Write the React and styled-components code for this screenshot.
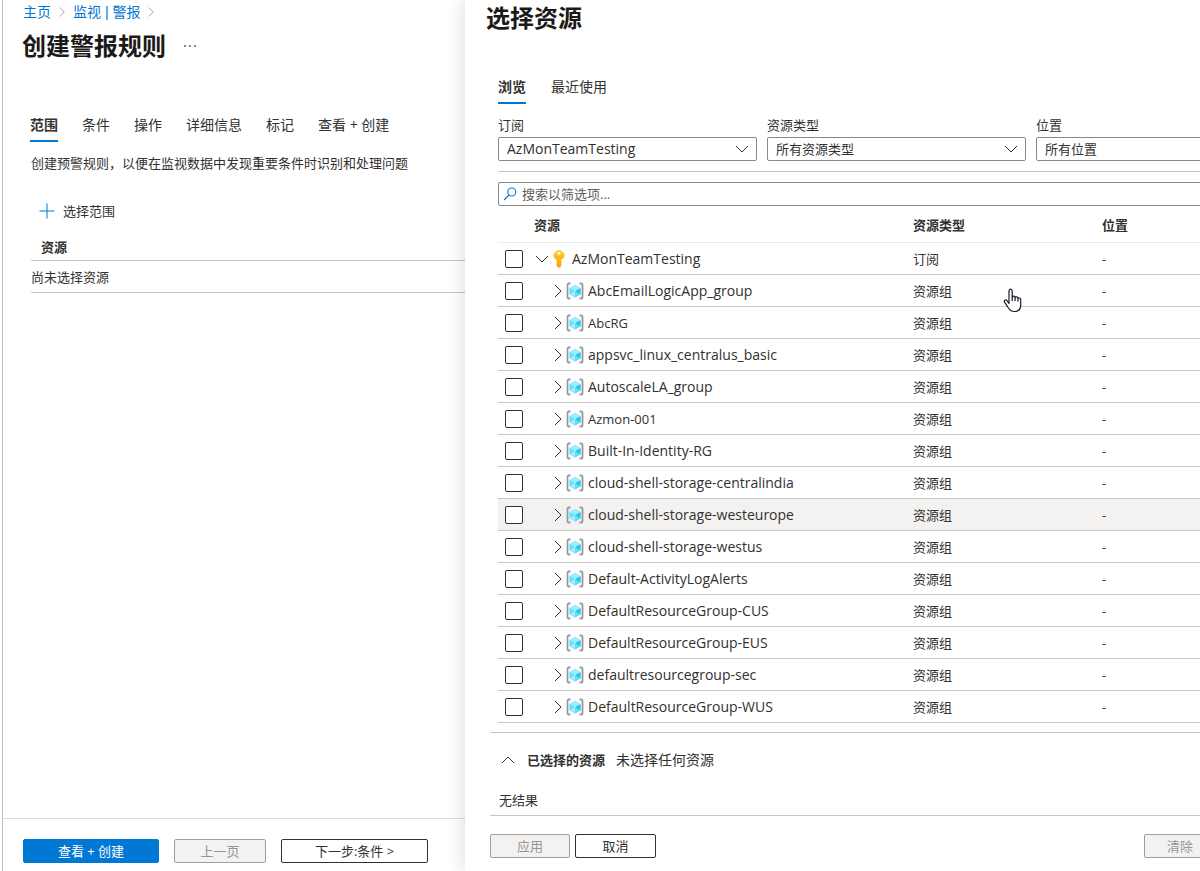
import React, { useState } from 'react';
import styled, { createGlobalStyle, css } from 'styled-components';

const GROUPS = [
    { name: 'AbcEmailLogicApp_group' },
    { name: 'AbcRG', small: true },
    { name: 'appsvc_linux_centralus_basic' },
    { name: 'AutoscaleLA_group' },
    { name: 'Azmon-001', small: true },
    { name: 'Built-In-Identity-RG' },
    { name: 'cloud-shell-storage-centralindia' },
    { name: 'cloud-shell-storage-westeurope', hovered: true },
    { name: 'cloud-shell-storage-westus' },
    { name: 'Default-ActivityLogAlerts' },
    { name: 'DefaultResourceGroup-CUS' },
    { name: 'DefaultResourceGroup-EUS' },
    { name: 'defaultresourcegroup-sec' },
    { name: 'DefaultResourceGroup-WUS' },
];

const STEPS = ['范围', '条件', '操作', '详细信息', '标记', '查看 + 创建'];

const PATHS = {
    right: 'M5 2l6 6-6 6',
    down: 'M2 5l6 6 6-6',
    up: 'M2 11l6-6 6 6',
};

const Chevron = ({ dir, size = 16, color = '#323130' }) => (
    <svg width={size} height={size} viewBox="0 0 16 16" fill="none" stroke={color} aria-hidden="true">
        <path d={PATHS[dir]} />
    </svg>
);

const KeyIcon = () => (
    <svg width="18" height="18" viewBox="0 0 18 18" aria-hidden="true">
        <defs>
            <linearGradient id="key" x1="0" y1="0" x2="0" y2="1">
                <stop offset="0" stopColor="#ffd21f" />
                <stop offset="1" stopColor="#f9a61a" />
            </linearGradient>
        </defs>
        <path
            fill="url(#key)"
            d="M9 0c1 0 1.900.4 2.600 1l2 2c1.400 1.400 1.400 3.500 0 4.900L11.200 10.200v1l.7.800-.7.900v1l.7.800-.7.900v.8L9 18l-2.400-2V10.200L4.400 7.900C3 6.500 3 4.400 4.400 3l2-2C7.100.4 8 0 9 0z"
        />
        <circle cx="9" cy="3.200" r="1.500" fill="#fff" />
        <path d="M8 10.500v5.500" stroke="#ff9300" strokeWidth=".8" />
        <path d="M6.200 7.200h5.600" stroke="#ff9f0a" strokeWidth=".8" />
    </svg>
);

const GroupIcon = () => (
    <svg width="18" height="18" viewBox="0 0 18 18" aria-hidden="true">
        <path d="M4.500 1.500H2.800A1.300 1.300 0 0 0 1.500 2.800v12.400a1.300 1.300 0 0 0 1.300 1.300h1.700" fill="none" stroke="#999" strokeWidth="1.800" />
        <path d="M13.500 1.500h1.700A1.300 1.300 0 0 1 16.500 2.800v12.400a1.300 1.300 0 0 1-1.300 1.300h-1.700" fill="none" stroke="#999" strokeWidth="1.800" />
        <path d="M14.600 5.800v6.400L9 15.500V9z" fill="#32bedd" />
        <path d="M14.600 5.800L9 9 3.400 5.800 9 2.500z" fill="#9cebff" />
        <path d="M9 9v6.500l-5.600-3.300V5.800z" fill="#50e6ff" />
        <path d="M3.400 12.200L9 9v6.500z" fill="#9cebff" />
        <path d="M14.600 12.200L9 9v6.500z" fill="#50e6ff" />
    </svg>
);

const SearchIcon = () => (
    <svg width="14" height="14" viewBox="0 0 14 14" fill="none" stroke="#0078d4" strokeWidth="1.100" aria-hidden="true">
        <circle cx="8.800" cy="5" r="4" />
        <path d="M6 8L1 13" />
    </svg>
);

const HandIcon = () => (
    <svg width="19" height="25" viewBox="0 0 19 25" fill="#fff" stroke="#1b1b2e" strokeWidth="1.200" strokeLinejoin="round" aria-hidden="true">
        <path d="M6 15.500V3c0-2.600 3.200-2.600 3.200 0v6c.3-1.400 2.900-1.200 2.900.5.500-1.200 2.900-.9 2.900.9.600-.9 2.700-.6 2.700 1.200v5.200c0 4-2.300 6.700-6.200 6.700-3.600 0-5-1.600-6.600-4.300l-3.400-5c-1-1.900 1.200-3 2.500-1.500z" />
        <path d="M9.200 9v4M12.100 9.500v3.500M15 10.500v3" />
    </svg>
);

const App = () => {
    const [search, setSearch] = useState('');

    return (
        <>
            <GlobalStyle />
            <Shell>
                <Page>
                    <PageBody>
                        <Breadcrumb>
                            <a href="#home">主页</a>
                            <Chevron dir="right" size={12} color="#8a8886" />
                            <a href="#monitor">监视 | 警报</a>
                            <Chevron dir="right" size={12} color="#8a8886" />
                        </Breadcrumb>
                        <TitleRow>
                            <Title>创建警报规则</Title>
                            <IconButton aria-label="更多">
                                <svg width="14" height="4" viewBox="0 0 14 4" fill="#605e5c">
                                    <circle cx="2" cy="2" r="1" />
                                    <circle cx="7" cy="2" r="1" />
                                    <circle cx="12" cy="2" r="1" />
                                </svg>
                            </IconButton>
                        </TitleRow>
                        <Steps>
                            {STEPS.map((step, i) => (
                                <Tab key={step} $active={i === 0}>{step}</Tab>
                            ))}
                        </Steps>
                        <Scope>
                            <Description>创建预警规则，以便在监视数据中发现重要条件时识别和处理问题</Description>
                            <ScopeButton>
                                <svg width="16" height="16" viewBox="0 0 16 16" stroke="#0078d4" fill="none">
                                    <path d="M8 0.500v15M0.500 8h15" />
                                </svg>
                                选择范围
                            </ScopeButton>
                            <ScopeTable>
                                <thead>
                                    <tr><th>资源</th></tr>
                                </thead>
                                <tbody>
                                    <tr><td>尚未选择资源</td></tr>
                                </tbody>
                            </ScopeTable>
                        </Scope>
                    </PageBody>
                    <PageFooter>
                        <Button $primary $width={136}>查看 + 创建</Button>
                        <Button disabled $width={92}>上一页</Button>
                        <Button $width={147}>下一步:条件 &gt;</Button>
                    </PageFooter>
                </Page>

                <Drawer>
                    <DrawerInner>
                        <DrawerHeader>
                            <Title>选择资源</Title>
                        </DrawerHeader>
                        <Browse>
                            <BrowseTabs>
                                <Tab $active>浏览</Tab>
                                <Tab>最近使用</Tab>
                            </BrowseTabs>
                            <Filters>
                                <Filter id="subscription" label="订阅" value="AzMonTeamTesting" large />
                                <Filter id="type" label="资源类型" value="所有资源类型" />
                                <Filter id="location" label="位置" value="所有位置" />
                            </Filters>
                            <SearchBox>
                                <SearchIcon />
                                <input
                                    type="text"
                                    aria-label="搜索"
                                    placeholder="搜索以筛选项..."
                                    value={search}
                                    onChange={(e) => setSearch(e.target.value)}
                                />
                            </SearchBox>
                            <ResourceTable>
                                <colgroup>
                                    <CheckCol />
                                    <NameCol />
                                    <TypeCol />
                                    <col />
                                </colgroup>
                                <thead>
                                    <tr>
                                        <th />
                                        <th>资源</th>
                                        <th>资源类型</th>
                                        <th>位置</th>
                                    </tr>
                                </thead>
                                <tbody>
                                    <ResourceRow name="AzMonTeamTesting" type="订阅" root />
                                    {GROUPS.map((group) => (
                                        <ResourceRow key={group.name} type="资源组" {...group} />
                                    ))}
                                </tbody>
                            </ResourceTable>
                        </Browse>
                        <Selected>
                            <SelectedHeader>
                                <IconButton aria-label="折叠"><Chevron dir="up" /></IconButton>
                                <h2>已选择的资源</h2>
                                <span>未选择任何资源</span>
                            </SelectedHeader>
                            <Empty>无结果</Empty>
                        </Selected>
                        <DrawerFooter>
                            <Button disabled $width={80}>应用</Button>
                            <Button $width={81}>取消</Button>
                            <Spacer />
                            <Button disabled $width={72}>清除</Button>
                        </DrawerFooter>
                    </DrawerInner>
                    <Pointer><HandIcon /></Pointer>
                </Drawer>
            </Shell>
        </>
    );
};

const Filter = ({ id, label, value, large }) => (
    <Field>
        <label htmlFor={id}>{label}</label>
        <SelectWrap>
            <Select id={id} $large={large}>
                <option>{value}</option>
            </Select>
            <Chevron dir="down" />
        </SelectWrap>
    </Field>
);

const ResourceRow = ({ name, type, root, small, hovered }) => (
    <Row $hovered={hovered}>
        <td><Checkbox type="checkbox" aria-label={name} /></td>
        <td>
            <Tree $root={root}>
                <IconButton aria-label={root ? '折叠' : '展开'}>
                    <Chevron dir={root ? 'down' : 'right'} />
                </IconButton>
                {root ? <KeyIcon /> : <GroupIcon />}
                <Name $small={small}>{name}</Name>
            </Tree>
        </td>
        <td>{type}</td>
        <td>-</td>
    </Row>
);

export default App;

const GlobalStyle = createGlobalStyle`
  * {
    box-sizing: border-box;
  }
  body {
    margin: 0;
    background: #fff;
    color: #323130;
    font-family: "Open Sans", "Noto Sans CJK SC", sans-serif;
    font-size: 13px;
    line-height: 20px;
  }
  button, input, select {
    font: inherit;
    color: inherit;
  }
  svg {
    flex: none;
    display: block;
  }
`;

const Shell = styled.div`
  display: grid;
  grid-template-columns: minmax(0, 31fr) minmax(0, 49fr);
  min-height: 100vh;
  overflow: hidden;
`;

const Page = styled.main`
  display: flex;
  flex-direction: column;
  margin-left: 2px;
  border-left: 1px solid #bdbdbd;
`;

const PageBody = styled.div`
  flex: 1;
  padding: 2px 0 0 19px;
`;

const Breadcrumb = styled.nav`
  display: flex;
  align-items: center;
  gap: 5px;
  padding-left: 1px;
  font-family: "Liberation Sans", "Noto Sans CJK SC", sans-serif;
  font-size: 14px;
  a {
    color: #0078d4;
    text-decoration: none;
  }
`;

const TitleRow = styled.div`
  display: flex;
  align-items: center;
  gap: 17px;
  margin-top: 8px;
`;

const Title = styled.h1`
  margin: 0;
  color: #1b1a19;
  font-size: 24px;
  font-weight: 700;
  line-height: 32px;
`;

const IconButton = styled.button`
  display: flex;
  align-items: center;
  padding: 0;
  border: 0;
  background: none;
  cursor: pointer;
`;

const Steps = styled.div`
  display: flex;
  gap: 24px;
  margin: 53px 0 0 8px;
`;

const Tab = styled.button`
  padding: 0 0 5px;
  border: 0;
  border-bottom: 2px solid ${({ $active }) => ($active ? '#0078d4' : 'transparent')};
  background: none;
  font-size: 14px;
  font-weight: ${({ $active }) => ($active ? 600 : 400)};
  line-height: 20px;
  white-space: nowrap;
  cursor: pointer;
`;

const Scope = styled.section`
  margin-left: 9px;
`;

const Description = styled.p`
  margin: 11px 0 28px;
`;

const ScopeButton = styled.button`
  display: flex;
  align-items: center;
  gap: 8px;
  padding: 0 0 0 8px;
  border: 0;
  background: none;
  cursor: pointer;
`;

const ScopeTable = styled.table`
  width: 100%;
  margin-top: 16px;
  border-spacing: 0;
  th, td {
    padding: 0;
    border-bottom: 1px solid #c8c6c4;
    text-align: left;
  }
  th {
    padding: 0 0 3px 10px;
    font-weight: 600;
  }
  td {
    height: 32px;
  }
`;

const PageFooter = styled.footer`
  display: flex;
  gap: 15px;
  padding: 20px 20px 8px;
  border-top: 1px solid #dcdcdc;
`;

const Button = styled.button`
  flex: none;
  width: ${({ $width }) => $width}px;
  height: 24px;
  padding: 0;
  border: 1px solid #323130;
  border-radius: 2px;
  background: #fff;
  line-height: 20px;
  white-space: nowrap;
  cursor: pointer;
  ${({ $primary }) => $primary && css`
    border-color: #0078d4;
    background: #0078d4;
    color: #fff;
  `}
  &:disabled {
    border-color: #a19f9d;
    background: #f3f2f1;
    color: #979593;
    cursor: default;
  }
`;

const Drawer = styled.aside`
  position: relative;
  background: #fff;
  box-shadow: 0 0 18px rgba(0, 0, 0, 0.16);
`;

// the blade is wider than the space left for it and runs off the right side
const DrawerInner = styled.div`
  display: flex;
  flex-direction: column;
  min-height: 100%;
  margin-right: -95px;
`;

const DrawerHeader = styled.header`
  padding: 2px 21px 0;
`;

const Browse = styled.div`
  flex: 1;
  padding-left: 33px;
`;

const BrowseTabs = styled.div`
  display: flex;
  gap: 25px;
  margin-top: 43px;
`;

const Filters = styled.div`
  display: grid;
  grid-template-columns: repeat(3, minmax(0, 1fr));
  gap: 10px;
  padding: 11px 0 10px;
  border-bottom: 1px solid #c8c6c4;
`;

const Field = styled.div`
  label {
    display: block;
    margin-bottom: 2px;
  }
`;

const SelectWrap = styled.div`
  position: relative;
  svg {
    position: absolute;
    top: 4px;
    right: 7px;
    pointer-events: none;
  }
`;

const Select = styled.select`
  display: block;
  width: 100%;
  height: 24px;
  padding: 0 28px 0 8px;
  border: 1px solid #8a8886;
  border-radius: 2px;
  background: #fff;
  appearance: none;
  font-size: ${({ $large }) => ($large ? 14 : 13)}px;
`;

const SearchBox = styled.div`
  display: flex;
  align-items: center;
  gap: 5px;
  height: 24px;
  margin-top: 10px;
  padding-left: 4px;
  border: 1px solid #8a8886;
  border-radius: 2px;
  input {
    flex: 1;
    padding: 0;
    border: 0;
    outline: 0;
    background: none;
  }
  input::placeholder {
    color: #605e5c;
    opacity: 1;
  }
`;

const ResourceTable = styled.table`
  width: 100%;
  table-layout: fixed;
  border-spacing: 0;
  th, td {
    padding: 0;
    text-align: left;
  }
  th {
    height: 37px;
    padding-top: 2px;
    border-bottom: 1px solid #edebe9;
    font-weight: 600;
  }
  td {
    height: 32px;
    border-bottom: 1px solid #c8c6c4;
  }
`;

const CheckCol = styled.col`
  width: 36px;
`;

const NameCol = styled.col`
  width: 379px;
`;

const TypeCol = styled.col`
  width: 189px;
`;

const Row = styled.tr`
  background: ${({ $hovered }) => ($hovered ? '#f3f2f1' : '#fff')};
`;

const Checkbox = styled.input`
  display: block;
  width: 18px;
  height: 18px;
  margin: 0 0 0 7px;
  border: 1px solid #323130;
  border-radius: 2px;
  background: #fff;
  appearance: none;
  &:checked {
    background: #0078d4;
  }
`;

const Tree = styled.div`
  display: flex;
  align-items: center;
  padding-left: ${({ $root }) => ($root ? 0 : 16)}px;
`;

const Name = styled.span`
  margin-left: 4px;
  font-size: ${({ $small }) => ($small ? 13 : 14)}px;
`;

const Selected = styled.section`
  margin: 9px 0 0 25px;
  padding: 17px 0 5px;
  border-top: 1px solid #c8c6c4;
  border-bottom: 1px solid #c8c6c4;
`;

const SelectedHeader = styled.div`
  display: flex;
  align-items: center;
  gap: 11px;
  padding-left: 10px;
  h2 {
    margin: 0;
    font-size: 13px;
    font-weight: 600;
  }
  span {
    font-size: 14px;
  }
`;

const Empty = styled.p`
  margin: 20px 0 0 9px;
`;

const DrawerFooter = styled.footer`
  display: flex;
  gap: 5px;
  padding: 18px 79px 13px 25px;
`;

const Spacer = styled.div`
  flex: 1;
`;

const Pointer = styled.div`
  position: absolute;
  top: 288px;
  left: 538px;
  pointer-events: none;
`;
